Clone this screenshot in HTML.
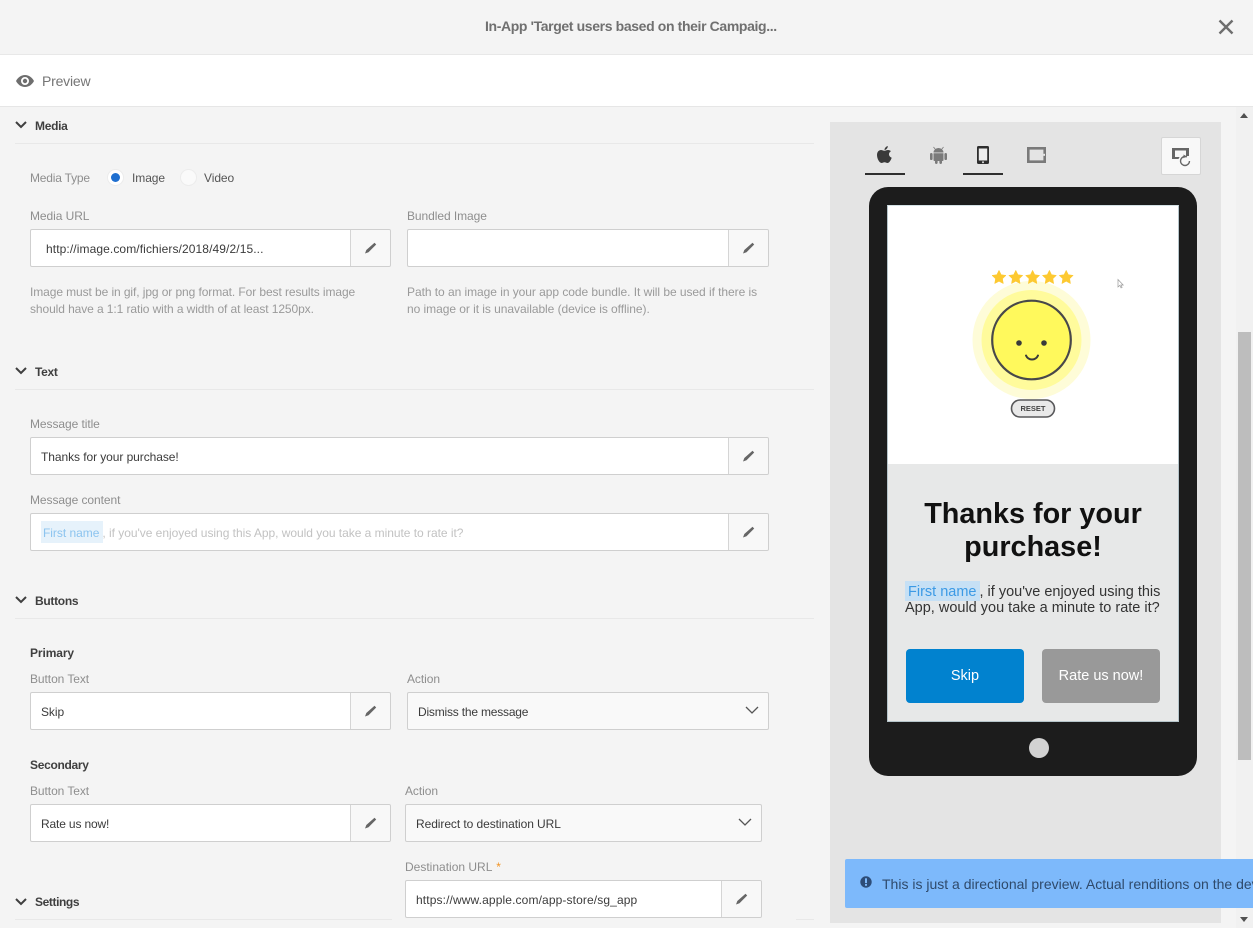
<!DOCTYPE html>
<html lang="en"><head><meta charset="utf-8"><title>In-App Preview</title>
<style>
html,body{margin:0;padding:0}
body{width:1253px;height:928px;position:relative;overflow:hidden;background:#f4f4f4;font-family:"Liberation Sans",sans-serif;color:#4b4b4b}
.a{position:absolute}
.t{position:absolute;white-space:nowrap;font-size:12px;line-height:16px;letter-spacing:-.07px;margin-top:1px}
.lab{color:#8e8e8e}
.sec{color:#3f3f3f;font-weight:bold;letter-spacing:-.3px}
.hr{position:absolute;left:15px;width:799px;height:1px;background:#e8e8e8}
.hint{color:#9a9a9a;line-height:17px}
.inp{position:absolute;height:36px;background:#fff;border:1px solid #cfcfcf;border-radius:2px}
.btn{position:absolute;top:0;right:0;width:39px;height:36px;background:#f8f8f8;border-left:1px solid #d5d5d5;border-radius:0 2px 2px 0}
.btn svg{position:absolute;left:13px;top:12px}
.val{position:absolute;left:10px;top:11px;white-space:nowrap;font-size:12px;line-height:16px;letter-spacing:-.07px;color:#3b3b3b}
.sel{background:#f9f9f9}
.sel svg{position:absolute;right:9px;top:13px}
.chev{position:absolute;left:15px}
</style></head><body>

<div class="a" style="left:0;top:0;width:1253px;height:54px;background:#f4f4f4;border-bottom:1px solid #e8e8e8"></div>
<div class="t" style="left:485px;top:17px;font-size:14px;font-weight:bold;color:#707070;letter-spacing:-.37px">In-App 'Target users based on their Campaig...</div>
<svg class="a" style="left:1217px;top:18px" width="18" height="18" viewBox="0 0 18 18"><path d="M2.500 2.500L15.500 15.500M15.500 2.500L2.500 15.500" stroke="#6e6e6e" stroke-width="2.400" fill="none"/></svg>

<div class="a" style="left:0;top:55px;width:1253px;height:51px;background:#fff;border-bottom:1px solid #e6e6e6"></div>
<svg class="a" style="left:16px;top:75px" width="18" height="12" viewBox="0 0 18 12"><path fill-rule="evenodd" d="M9 0C5 0 1.800 2.500 0 6c1.800 3.500 5 6 9 6s7.200-2.500 9-6c-1.800-3.500-5-6-9-6zm0 2a4 4 0 1 1 0 8 4 4 0 0 1 0-8z" fill="#6e6e6e"/><circle cx="9" cy="6" r="2.200" fill="#6e6e6e"/></svg>
<div class="t" style="left:42px;top:72px;font-size:14px;color:#757575;letter-spacing:-.2px">Preview</div>

<!-- Media -->
<svg class="chev" style="top:121px" width="12" height="8" viewBox="0 0 12 8"><path d="M1 1l5 5 5-5" stroke="#3f3f3f" stroke-width="2" fill="none"/></svg>
<div class="t sec" style="left:35px;top:117px">Media</div>
<div class="hr" style="top:143px"></div>
<div class="t lab" style="left:30px;top:169px;letter-spacing:-.2px">Media Type</div>
<div class="a" style="left:107px;top:169px;width:15px;height:15px;border-radius:50%;background:#fff;border:1px solid #ececec"></div>
<div class="a" style="left:111px;top:173px;width:9px;height:9px;border-radius:50%;background:#1f6fd0"></div>
<div class="t" style="left:132px;top:169px;color:#555">Image</div>
<div class="a" style="left:180px;top:169px;width:15px;height:15px;border-radius:50%;background:#fafafa;border:1px solid #ececec"></div>
<div class="t" style="left:204px;top:169px;color:#555">Video</div>

<div class="t lab" style="left:30px;top:207px">Media URL</div>
<div class="inp" style="left:30px;top:229px;width:359px"><div class="val" style="left:15px;letter-spacing:.1px">http://image.com/fichiers/2018/49/2/15...</div><div class="btn"><svg width="13" height="13" viewBox="0 0 13 13"><path d="M10.500.8l1.700 1.700-7.700 7.700-3.500 1.300 1.300-3.500z" fill="#666"/></svg></div></div>
<div class="t lab" style="left:407px;top:207px">Bundled Image</div>
<div class="inp" style="left:407px;top:229px;width:360px"><div class="btn"><svg width="13" height="13" viewBox="0 0 13 13"><path d="M10.500.8l1.700 1.700-7.700 7.700-3.500 1.300 1.300-3.500z" fill="#666"/></svg></div></div>
<div class="t hint" style="left:30px;top:283px;letter-spacing:-.09px">Image must be in gif, jpg or png format. For best results image<br>should have a 1:1 ratio with a width of at least 1250px.</div>
<div class="t hint" style="left:407px;top:283px;letter-spacing:-.05px">Path to an image in your app code bundle. It will be used if there is<br>no image or it is unavailable (device is offline).</div>

<!-- Text -->
<svg class="chev" style="top:367px" width="12" height="8" viewBox="0 0 12 8"><path d="M1 1l5 5 5-5" stroke="#3f3f3f" stroke-width="2" fill="none"/></svg>
<div class="t sec" style="left:35px;top:363px">Text</div>
<div class="hr" style="top:389px"></div>
<div class="t lab" style="left:30px;top:415px">Message title</div>
<div class="inp" style="left:30px;top:437px;width:737px"><div class="val">Thanks for your purchase!</div><div class="btn"><svg width="13" height="13" viewBox="0 0 13 13"><path d="M10.500.8l1.700 1.700-7.700 7.700-3.500 1.300 1.300-3.500z" fill="#666"/></svg></div></div>
<div class="t lab" style="left:30px;top:491px">Message content</div>
<div class="inp" style="left:30px;top:513px;width:737px"><div class="a" style="left:10px;top:7px;width:62px;height:22px;background:#e6f2fb"></div><div class="val" style="left:12px;color:#c2c2c2;letter-spacing:-.03px"><span style="color:#8cc4ef;padding-right:3px">First name</span>, if you've enjoyed using this App, would you take a minute to rate it?</div><div class="btn"><svg width="13" height="13" viewBox="0 0 13 13"><path d="M10.500.8l1.700 1.700-7.700 7.700-3.500 1.300 1.300-3.500z" fill="#666"/></svg></div></div>

<!-- Buttons -->
<svg class="chev" style="top:596px" width="12" height="8" viewBox="0 0 12 8"><path d="M1 1l5 5 5-5" stroke="#3f3f3f" stroke-width="2" fill="none"/></svg>
<div class="t sec" style="left:35px;top:592px">Buttons</div>
<div class="hr" style="top:618px"></div>
<div class="t sec" style="left:30px;top:644px;letter-spacing:-.1px">Primary</div>
<div class="t lab" style="left:30px;top:670px">Button Text</div>
<div class="inp" style="left:30px;top:692px;width:359px"><div class="val">Skip</div><div class="btn"><svg width="13" height="13" viewBox="0 0 13 13"><path d="M10.500.8l1.700 1.700-7.700 7.700-3.500 1.300 1.300-3.500z" fill="#666"/></svg></div></div>
<div class="t lab" style="left:407px;top:670px">Action</div>
<div class="inp sel" style="left:407px;top:692px;width:360px"><div class="val" style="letter-spacing:-.2px">Dismiss the message</div><svg width="14" height="9" viewBox="0 0 14 9"><path d="M1 1l6 6 6-6" stroke="#555" stroke-width="1.300" fill="none"/></svg></div>

<div class="t sec" style="left:30px;top:756px">Secondary</div>
<div class="t lab" style="left:30px;top:782px">Button Text</div>
<div class="inp" style="left:30px;top:804px;width:359px"><div class="val" style="letter-spacing:-.15px">Rate us now!</div><div class="btn"><svg width="13" height="13" viewBox="0 0 13 13"><path d="M10.500.8l1.700 1.700-7.700 7.700-3.500 1.300 1.300-3.500z" fill="#666"/></svg></div></div>
<div class="t lab" style="left:405px;top:782px">Action</div>
<div class="inp sel" style="left:405px;top:804px;width:355px"><div class="val">Redirect to destination URL</div><svg width="14" height="9" viewBox="0 0 14 9"><path d="M1 1l6 6 6-6" stroke="#555" stroke-width="1.300" fill="none"/></svg></div>
<div class="t lab" style="left:405px;top:858px;letter-spacing:0">Destination URL <span style="color:#f29423;margin-left:1px">*</span></div>

<!-- Settings -->
<svg class="chev" style="top:898px" width="12" height="8" viewBox="0 0 12 8"><path d="M1 1l5 5 5-5" stroke="#3f3f3f" stroke-width="2" fill="none"/></svg>
<div class="t sec" style="left:35px;top:893px;letter-spacing:-.4px">Settings</div>
<div class="hr" style="top:919px"></div>
<div class="a" style="left:392px;top:915px;width:404px;height:8px;background:#f4f4f4"></div>
<div class="inp" style="left:405px;top:880px;width:355px"><div class="val" style="letter-spacing:.12px">https://www.apple.com/app-store/sg_app</div><div class="btn"><svg width="13" height="13" viewBox="0 0 13 13"><path d="M10.500.8l1.700 1.700-7.700 7.700-3.500 1.300 1.300-3.500z" fill="#666"/></svg></div></div>

<!-- Preview panel -->
<div class="a" style="left:830px;top:122px;width:391px;height:801px;background:#e4e4e4"></div>

<!-- scrollbar -->
<div class="a" style="left:1236px;top:107px;width:17px;height:821px;background:#f1f1f1"></div>
<div class="a" style="left:1238px;top:332px;width:13px;height:428px;background:#bdbdbd"></div>
<svg class="a" style="left:1240px;top:113px" width="8" height="5"><path d="M0 5L4 0l4 5z" fill="#505050"/></svg>
<svg class="a" style="left:1240px;top:917px" width="8" height="5"><path d="M0 0h8L4 5z" fill="#505050"/></svg>

<!-- device tabs -->
<svg class="a" style="left:877px;top:146px" width="15" height="18" viewBox="0 0 15 18"><path d="M7.500 4.700C6 4.700 5.300 4 4 4 2 4 0 5.800 0 9c0 3.800 2.500 8 4.500 8 1.200 0 1.700-.8 3-.8s1.800.8 3 .8c1.700 0 3.500-3 4.200-5.200-1.800-.7-2.700-2-2.700-3.500 0-1.400.8-2.500 2-3.200C13 4.300 11.800 4 11 4c-1.500 0-2.300.7-3.500.7zM7.500 4C7.500 2 9 .5 10.800 0c0 2-1.300 3.800-3.300 4z" fill="#3a3a3a"/></svg>
<div class="a" style="left:865px;top:173px;width:40px;height:2px;background:#2f2f2f"></div>
<svg class="a" style="left:930px;top:146px" width="17" height="18" viewBox="0 0 17 18"><g fill="#7a7a7a"><path d="M3.500 6.500a5 4.500 0 0 1 10 0z"/><path d="M3.500 7.300h10v6.700a1 1 0 0 1-1 1h-8a1 1 0 0 1-1-1z"/><rect x="0" y="7" width="2.600" height="7" rx="1.300"/><rect x="14.400" y="7" width="2.600" height="7" rx="1.300"/><rect x="5" y="14" width="2.600" height="4" rx="1.200"/><rect x="9.400" y="14" width="2.600" height="4" rx="1.200"/></g><path d="M3.500 1l2 2.500M13.500 1l-2 2.500" stroke="#7a7a7a" stroke-width=".8"/></svg>
<svg class="a" style="left:977px;top:146px" width="12" height="18" viewBox="0 0 12 18"><rect width="12" height="18" rx="1.500" fill="#2e2e2e"/><rect x="1.800" y="2.500" width="8.400" height="12" fill="#ececec"/><circle cx="6" cy="16.200" r="1" fill="#ddd"/></svg>
<div class="a" style="left:963px;top:173px;width:40px;height:2px;background:#2f2f2f"></div>
<svg class="a" style="left:1027px;top:147px" width="19" height="16" viewBox="0 0 19 16"><path fill-rule="evenodd" d="M0 0h19v16H0zM2.600 2.600v10.800h13.800V2.600z" fill="#7a7a7a"/><rect x="16.400" y="6.800" width="1.600" height="2" fill="#eee"/></svg>
<div class="a" style="left:1161px;top:137px;width:38px;height:36px;background:#f8f8f8;border:1px solid #d6d6d6;border-radius:2px"></div>
<svg class="a" style="left:1171px;top:147px" width="20" height="20" viewBox="0 0 20 20"><path d="M1 1h17v8h-8a6 6 0 0 0-2.500 3H1z" fill="#666"/><rect x="4" y="3.500" width="11" height="6.500" fill="#f8f8f8"/><circle cx="14" cy="14" r="4.500" fill="none" stroke="#666" stroke-width="1.400" stroke-dasharray="23 6"/><path d="M12.500 7.500l3 1.900-3 1.900z" fill="#666"/></svg>

<!-- phone -->
<div class="a" style="left:869px;top:187px;width:328px;height:589px;background:#1c1c1c;border-radius:19px"></div>
<div class="a" style="left:887px;top:205px;width:292px;height:517px;box-sizing:border-box;background:#e7e8e8;border:1px solid #b5c4ca;border-top-color:#d5e2e6"></div>
<div class="a" style="left:888px;top:206px;width:290px;height:258px;background:#fff"></div>
<svg class="a" style="left:960px;top:260px" width="170" height="170" viewBox="0 0 170 170">
<circle cx="71.500" cy="80" r="59" fill="#fefcd8"/><circle cx="71.500" cy="80" r="50" fill="#fffb9c"/><circle cx="71.500" cy="80" r="39.300" fill="#fff95c" stroke="#48484a" stroke-width="2.200"/>
<circle cx="59" cy="83" r="2.800" fill="#3a3a3a"/><circle cx="84" cy="83" r="2.800" fill="#3a3a3a"/><path d="M66 95.500a6.500 6.500 0 0 0 12 0" stroke="#3a3a3a" stroke-width="2" fill="none" stroke-linecap="round"/>
<g fill="#fdc931" stroke="#fdc931" stroke-width=".5"><path d="M39 10.300l2.200 4.400 4.800.7-3.500 3.400.8 4.800-4.300-2.300-4.300 2.300.8-4.800-3.500-3.400 4.800-.7z"/><path d="M55.800 10.300l2.200 4.400 4.800.7-3.500 3.400.8 4.800-4.300-2.300-4.300 2.300.8-4.800-3.500-3.400 4.800-.7z"/><path d="M72.600 10.300l2.200 4.400 4.800.7-3.500 3.400.8 4.800-4.300-2.300-4.300 2.300.8-4.800-3.500-3.400 4.800-.7z"/><path d="M89.400 10.300l2.200 4.400 4.800.7-3.500 3.400.8 4.800-4.300-2.300-4.300 2.300.8-4.800-3.500-3.400 4.800-.7z"/><path d="M106.200 10.300l2.200 4.400 4.800.7-3.500 3.400.8 4.800-4.300-2.300-4.300 2.300.8-4.800-3.500-3.400 4.800-.7z"/></g>
<rect x="51.500" y="140" width="43" height="17" rx="8.500" fill="#e9e9e9" stroke="#58585a" stroke-width="1.600"/>
<text x="73" y="151" font-family="Liberation Sans" font-size="7.500" font-weight="bold" fill="#444" text-anchor="middle">RESET</text>
<path d="M158 19.500v7.500l1.800-1.600 1.300 2.500 1-.5-1.200-2.400h2.300z" fill="#fff" stroke="#999" stroke-width=".7"/>
</svg>
<div class="t" style="left:888px;top:497px;width:290px;text-align:center;font-size:28.800px;line-height:33px;font-weight:bold;color:#111;white-space:normal;letter-spacing:0">Thanks for your<br>purchase!</div>
<div class="a" style="left:905px;top:581px;width:75px;height:20px;background:#c6e0f5"></div>
<div class="t" style="left:905px;top:583px;width:262px;font-size:14.500px;line-height:16px;color:#333;letter-spacing:0"><span style="color:#3c9ae5;padding:0 3px">First name</span>, if you've enjoyed using this<br>App, would you take a minute to rate it?</div>
<div class="a" style="left:906px;top:649px;width:118px;height:54px;background:#0182cf;border-radius:4px"></div>
<div class="t" style="left:906px;top:667px;width:118px;text-align:center;font-size:14.500px;color:#fff;letter-spacing:0">Skip</div>
<div class="a" style="left:1042px;top:649px;width:118px;height:54px;background:#999;border-radius:4px"></div>
<div class="t" style="left:1042px;top:667px;width:118px;text-align:center;font-size:14.500px;color:#fff;letter-spacing:0">Rate us now!</div>
<div class="a" style="left:1029px;top:738px;width:20px;height:20px;border-radius:50%;background:#d2d2d2"></div>

<!-- notice -->
<div class="a" style="left:845px;top:859px;width:408px;height:49px;background:#7db9fb;border-radius:2px 0 0 2px;overflow:hidden">
<svg class="a" style="left:15px;top:17px" width="12" height="12" viewBox="0 0 12 12"><circle cx="6" cy="6" r="5.700" fill="#2d4d78"/><rect x="5" y="2.300" width="2" height="4.800" fill="#7db9fb"/><rect x="5" y="8" width="2" height="1.800" fill="#7db9fb"/></svg>
<div class="t" style="left:37px;top:16px;font-size:14px;color:#2f4a6b;letter-spacing:0">This is just a directional preview. Actual renditions on the device may vary.</div>
</div>
</body></html>
